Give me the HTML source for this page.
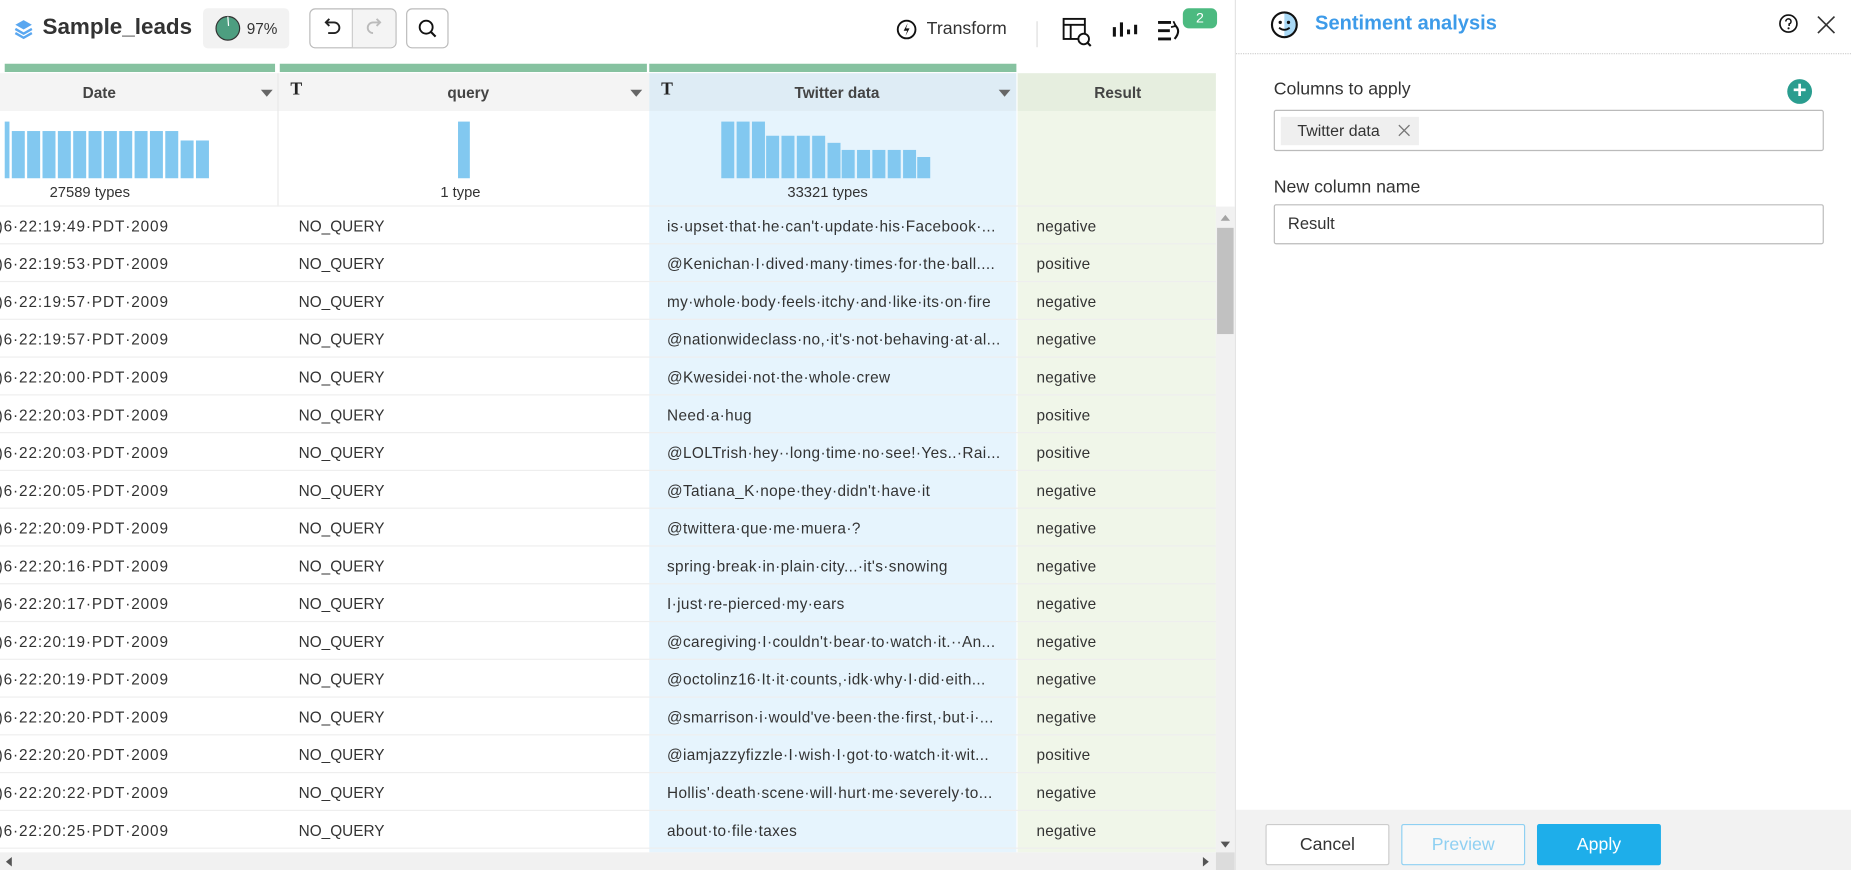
<!DOCTYPE html>
<html><head><meta charset="utf-8"><style>
*{box-sizing:border-box;margin:0;padding:0}
html,body{width:1851px;height:870px;overflow:hidden;background:#fff}
#s{position:absolute;left:0;top:0;width:1568px;height:737px;transform:scale(1.18048);transform-origin:0 0;font-family:"Liberation Sans",sans-serif;color:#333;overflow:hidden}
.a{position:absolute}
.row{position:absolute;left:0;width:1030px;height:32px;border-bottom:1px solid #eee;font-size:13px}
.row span{position:absolute;top:9px;white-space:nowrap}
.row span:nth-child(1){letter-spacing:0.75px}
.row span:nth-child(3){letter-spacing:0.33px}
.row span:nth-child(4){letter-spacing:0.2px}
.bar{position:absolute;background:#82c8f0;bottom:0}
.btn{position:absolute;top:698px;height:35px;width:105px;border:1px solid #ccc;border-radius:2px;font-size:15px;text-align:center;line-height:33px}
.h{font-size:13px;font-weight:bold;color:#444}
</style></head><body><div id="s">
<!-- top bar -->
<svg class="a" style="left:10px;top:15px" width="20" height="20" viewBox="0 0 20 20"><path d="M10 2L17 6 10 10 3 6Z" fill="#5aa7f0"/><path d="M3 9.5L10 13.5 17 9.5" fill="none" stroke="#5aa7f0" stroke-width="2"/><path d="M3 13L10 17 17 13" fill="none" stroke="#5aa7f0" stroke-width="2"/></svg>
<div class="a" style="left:36px;top:13px;font-size:19px;font-weight:bold;color:#333">Sample_leads</div>
<div class="a" style="left:172px;top:7px;width:73px;height:34px;background:#f2f2f2;border-radius:4px"></div>
<svg class="a" style="left:182px;top:13px" width="22" height="22"><ellipse cx="11" cy="11" rx="10" ry="10" fill="#4d9e80" stroke="#333" stroke-width="1"/><path d="M11 1L11.6 9" stroke="#fff" stroke-width="1"/></svg>
<div class="a" style="left:209px;top:17px;font-size:13px">97%</div>
<div class="a" style="left:262px;top:7px;width:74px;height:34px;border:1px solid #bbb;border-radius:5px;overflow:hidden"><div class="a" style="left:35px;top:0;width:38px;height:34px;background:#f4f4f4;border-left:1px solid #ccc"></div></div>
<svg class="a" style="left:271px;top:14px" width="20" height="20" viewBox="0 0 20 20"><path d="M6 5H12a4.5 4.5 0 0 1 0 9H7" fill="none" stroke="#222" stroke-width="1.6"/><path d="M8 2L5 5 8 8" fill="none" stroke="#222" stroke-width="1.6"/></svg>
<svg class="a" style="left:307px;top:14px" width="20" height="20" viewBox="0 0 20 20"><path d="M14 5H9a4.5 4.5 0 0 0 0 9" fill="none" stroke="#bbb" stroke-width="1.6"/><path d="M12 2L15 5 12 8" fill="none" stroke="#bbb" stroke-width="1.6"/></svg>
<div class="a" style="left:344px;top:7px;width:36px;height:34px;border:1px solid #bbb;border-radius:5px"></div>
<svg class="a" style="left:352px;top:14px" width="20" height="20"><circle cx="9" cy="9" r="5.5" fill="none" stroke="#111" stroke-width="1.6"/><path d="M13 13L17 17" stroke="#111" stroke-width="1.8"/></svg>
<svg class="a" style="left:758px;top:15px" width="20" height="20"><circle cx="10" cy="10" r="7.5" fill="none" stroke="#111" stroke-width="1.6"/><path d="M11 4.5L7.5 11H10.5L9 15.5 12.5 9H9.5Z" fill="#111"/></svg>
<div class="a" style="left:785px;top:16px;font-size:15px;color:#333">Transform</div>
<div class="a" style="left:878px;top:18px;width:1px;height:22px;background:#ddd"></div>
<svg class="a" style="left:899px;top:14px" width="28" height="28"><rect x="2" y="2" width="18" height="17" fill="none" stroke="#111" stroke-width="1.6"/><path d="M2 7H20M8 7V19" stroke="#111" stroke-width="1.6"/><circle cx="19" cy="19" r="4.5" fill="#fff" stroke="#111" stroke-width="1.6"/><path d="M22 22L25 25" stroke="#111" stroke-width="1.8"/></svg>
<svg class="a" style="left:941px;top:17px" width="24" height="20"><path d="M3 6V14M9 2V14M15 8V12M21 4V12" stroke="#111" stroke-width="2.6"/></svg>
<svg class="a" style="left:979px;top:15px" width="24" height="24"><path d="M2 4H13M2 11H12M2 18H13" stroke="#111" stroke-width="2.4"/><path d="M16 6Q22 11 16 18" fill="none" stroke="#111" stroke-width="1.8"/><path d="M15 3L17 7 13 8" fill="none" stroke="#111" stroke-width="1.5"/></svg>
<div class="a" style="left:1002px;top:7px;width:29px;height:17px;background:#4cba80;border-radius:5px;color:#fff;font-size:12px;text-align:center;line-height:17px">2</div>

<!-- grid headers -->
<div class="a" style="left:4px;top:54px;width:229px;height:7px;background:#86c2a0"></div>
<div class="a" style="left:237px;top:54px;width:311px;height:7px;background:#86c2a0"></div>
<div class="a" style="left:550px;top:54px;width:311px;height:7px;background:#86c2a0"></div>
<div class="a" style="left:0;top:62px;width:550px;height:32px;background:#f4f4f4"></div>
<div class="a" style="left:235px;top:62px;width:1px;height:113px;background:#e8e8e8"></div>
<div class="a" style="left:550px;top:62px;width:311px;height:32px;background:#deecf5"></div>
<div class="a" style="left:862px;top:62px;width:168px;height:32px;background:#e6eedf"></div>
<div class="a" style="left:550px;top:94px;width:311px;height:628px;background:#e6f4fd"></div>
<div class="a" style="left:862px;top:94px;width:168px;height:628px;background:#f0f6e9"></div>
<div class="a h" style="left:70px;top:71px">Date</div>
<div class="a" style="left:221px;top:76px;width:0;height:0;border-left:5px solid transparent;border-right:5px solid transparent;border-top:6px solid #666"></div>
<div class="a" style="left:246px;top:68px;font-size:15px;font-weight:bold;font-family:'Liberation Serif',serif;color:#222">T</div>
<div class="a h" style="left:379px;top:71px">query</div>
<div class="a" style="left:534px;top:76px;width:0;height:0;border-left:5px solid transparent;border-right:5px solid transparent;border-top:6px solid #666"></div>
<div class="a" style="left:560px;top:68px;font-size:15px;font-weight:bold;font-family:'Liberation Serif',serif;color:#222">T</div>
<div class="a h" style="left:673px;top:71px">Twitter data</div>
<div class="a" style="left:846px;top:76px;width:0;height:0;border-left:5px solid transparent;border-right:5px solid transparent;border-top:6px solid #666"></div>
<div class="a h" style="left:927px;top:71px">Result</div>
<!-- histograms -->
<div class="a" style="left:4px;top:100px;width:180px;height:51px">
<div class="bar" style="left:0;width:4px;height:48px"></div>
<div class="bar" style="left:5.5px;width:11px;height:40px"></div><div class="bar" style="left:18.5px;width:11px;height:40px"></div><div class="bar" style="left:31.5px;width:11px;height:40px"></div><div class="bar" style="left:44.5px;width:11px;height:40px"></div><div class="bar" style="left:57.5px;width:11px;height:40px"></div><div class="bar" style="left:70.5px;width:11px;height:40px"></div><div class="bar" style="left:83.5px;width:11px;height:40px"></div><div class="bar" style="left:96.5px;width:11px;height:40px"></div><div class="bar" style="left:109.5px;width:11px;height:40px"></div><div class="bar" style="left:122.5px;width:11px;height:40px"></div><div class="bar" style="left:135.5px;width:11px;height:40px"></div>
<div class="bar" style="left:148.5px;width:11px;height:32px"></div><div class="bar" style="left:161.5px;width:11px;height:32px"></div>
</div>
<div class="a" style="left:42px;top:156px;font-size:12.5px">27589 types</div>
<div class="a" style="left:388px;top:103px;width:10px;height:48px;background:#82c8f0"></div>
<div class="a" style="left:373px;top:156px;font-size:12.5px">1 type</div>
<div class="a" style="left:611px;top:100px;width:200px;height:51px">
<div class="bar" style="left:0;width:11px;height:48px"></div><div class="bar" style="left:12.8px;width:11px;height:48px"></div><div class="bar" style="left:25.6px;width:11px;height:48px"></div>
<div class="bar" style="left:38.4px;width:11px;height:36px"></div><div class="bar" style="left:51.2px;width:11px;height:36px"></div><div class="bar" style="left:64px;width:11px;height:36px"></div><div class="bar" style="left:76.8px;width:11px;height:36px"></div>
<div class="bar" style="left:89.6px;width:11px;height:30px"></div>
<div class="bar" style="left:102.4px;width:11px;height:24px"></div><div class="bar" style="left:115.2px;width:11px;height:24px"></div><div class="bar" style="left:128px;width:11px;height:24px"></div><div class="bar" style="left:140.8px;width:11px;height:24px"></div><div class="bar" style="left:153.6px;width:11px;height:24px"></div>
<div class="bar" style="left:166.4px;width:11px;height:18px"></div>
</div>
<div class="a" style="left:667px;top:156px;font-size:12.5px">33321 types</div>
<div class="a" style="left:0;top:174px;width:1030px;height:1px;background:#eee"></div>

<!-- rows -->
<div class="a" style="left:0;top:175px">
<div class="row" style="top:0"><span style="left:-2px">)6·22:19:49·PDT·2009</span><span style="left:253px">NO_QUERY</span><span style="left:565px">is·upset·that·he·can't·update·his·Facebook·...</span><span style="left:878px">negative</span></div>
<div class="row" style="top:32px"><span style="left:-2px">)6·22:19:53·PDT·2009</span><span style="left:253px">NO_QUERY</span><span style="left:565px">@Kenichan·I·dived·many·times·for·the·ball....</span><span style="left:878px">positive</span></div>
<div class="row" style="top:64px"><span style="left:-2px">)6·22:19:57·PDT·2009</span><span style="left:253px">NO_QUERY</span><span style="left:565px">my·whole·body·feels·itchy·and·like·its·on·fire</span><span style="left:878px">negative</span></div>
<div class="row" style="top:96px"><span style="left:-2px">)6·22:19:57·PDT·2009</span><span style="left:253px">NO_QUERY</span><span style="left:565px">@nationwideclass·no,·it's·not·behaving·at·al...</span><span style="left:878px">negative</span></div>
<div class="row" style="top:128px"><span style="left:-2px">)6·22:20:00·PDT·2009</span><span style="left:253px">NO_QUERY</span><span style="left:565px">@Kwesidei·not·the·whole·crew</span><span style="left:878px">negative</span></div>
<div class="row" style="top:160px"><span style="left:-2px">)6·22:20:03·PDT·2009</span><span style="left:253px">NO_QUERY</span><span style="left:565px">Need·a·hug</span><span style="left:878px">positive</span></div>
<div class="row" style="top:192px"><span style="left:-2px">)6·22:20:03·PDT·2009</span><span style="left:253px">NO_QUERY</span><span style="left:565px">@LOLTrish·hey··long·time·no·see!·Yes..·Rai...</span><span style="left:878px">positive</span></div>
<div class="row" style="top:224px"><span style="left:-2px">)6·22:20:05·PDT·2009</span><span style="left:253px">NO_QUERY</span><span style="left:565px">@Tatiana_K·nope·they·didn't·have·it</span><span style="left:878px">negative</span></div>
<div class="row" style="top:256px"><span style="left:-2px">)6·22:20:09·PDT·2009</span><span style="left:253px">NO_QUERY</span><span style="left:565px">@twittera·que·me·muera·?</span><span style="left:878px">negative</span></div>
<div class="row" style="top:288px"><span style="left:-2px">)6·22:20:16·PDT·2009</span><span style="left:253px">NO_QUERY</span><span style="left:565px">spring·break·in·plain·city...·it's·snowing</span><span style="left:878px">negative</span></div>
<div class="row" style="top:320px"><span style="left:-2px">)6·22:20:17·PDT·2009</span><span style="left:253px">NO_QUERY</span><span style="left:565px">I·just·re-pierced·my·ears</span><span style="left:878px">negative</span></div>
<div class="row" style="top:352px"><span style="left:-2px">)6·22:20:19·PDT·2009</span><span style="left:253px">NO_QUERY</span><span style="left:565px">@caregiving·I·couldn't·bear·to·watch·it.··An...</span><span style="left:878px">negative</span></div>
<div class="row" style="top:384px"><span style="left:-2px">)6·22:20:19·PDT·2009</span><span style="left:253px">NO_QUERY</span><span style="left:565px">@octolinz16·It·it·counts,·idk·why·I·did·eith...</span><span style="left:878px">negative</span></div>
<div class="row" style="top:416px"><span style="left:-2px">)6·22:20:20·PDT·2009</span><span style="left:253px">NO_QUERY</span><span style="left:565px">@smarrison·i·would've·been·the·first,·but·i·...</span><span style="left:878px">negative</span></div>
<div class="row" style="top:448px"><span style="left:-2px">)6·22:20:20·PDT·2009</span><span style="left:253px">NO_QUERY</span><span style="left:565px">@iamjazzyfizzle·I·wish·I·got·to·watch·it·wit...</span><span style="left:878px">positive</span></div>
<div class="row" style="top:480px"><span style="left:-2px">)6·22:20:22·PDT·2009</span><span style="left:253px">NO_QUERY</span><span style="left:565px">Hollis'·death·scene·will·hurt·me·severely·to...</span><span style="left:878px">negative</span></div>
<div class="row" style="top:512px"><span style="left:-2px">)6·22:20:25·PDT·2009</span><span style="left:253px">NO_QUERY</span><span style="left:565px">about·to·file·taxes</span><span style="left:878px">negative</span></div>
</div>
<!-- scrollbars -->
<div class="a" style="left:1030px;top:175px;width:16px;height:547px;background:#f1f1f1"></div>
<div class="a" style="left:1031px;top:193px;width:14px;height:90px;background:#c1c1c1"></div>
<div class="a" style="left:1034px;top:182px;width:0;height:0;border-left:4px solid transparent;border-right:4px solid transparent;border-bottom:5px solid #a3a3a3"></div>
<div class="a" style="left:1034px;top:713px;width:0;height:0;border-left:4px solid transparent;border-right:4px solid transparent;border-top:5px solid #555"></div>
<div class="a" style="left:0;top:722px;width:1030px;height:15px;background:#f1f1f1"></div>
<div class="a" style="left:1030px;top:722px;width:16px;height:15px;background:#dcdcdc"></div>
<div class="a" style="left:5px;top:726px;width:0;height:0;border-top:4px solid transparent;border-bottom:4px solid transparent;border-right:5px solid #555"></div>
<div class="a" style="left:1019px;top:726px;width:0;height:0;border-top:4px solid transparent;border-bottom:4px solid transparent;border-left:5px solid #555"></div>

<!-- side panel -->
<div class="a" style="left:1046px;top:0;width:522px;height:737px;background:#fff;border-left:1px solid #e4e4e4"></div>
<div class="a" style="left:1047px;top:45px;width:521px;height:0;border-top:1px dotted #ccc"></div>
<svg class="a" style="left:1074px;top:7px" width="28" height="28"><path d="M14 3.5a10.5 10.5 0 0 1 0 21Z" fill="#a8d8f5"/><circle cx="14" cy="14" r="10.5" fill="none" stroke="#111" stroke-width="1.8"/><circle cx="10.5" cy="12" r="1.4" fill="#111"/><circle cx="17.5" cy="12" r="1.4" fill="#111"/><path d="M9.5 16.5Q14 20 18.5 16.5" fill="none" stroke="#111" stroke-width="1.5"/></svg>
<div class="a" style="left:1114px;top:10px;font-size:17px;font-weight:bold;color:#3d9be9">Sentiment analysis</div>
<svg class="a" style="left:1506px;top:11px" width="18" height="18"><circle cx="9" cy="9" r="7.2" fill="none" stroke="#111" stroke-width="1.4"/><path d="M6.8 7.2a2.2 2.2 0 1 1 2.8 2.1V11" fill="none" stroke="#111" stroke-width="1.3"/><circle cx="9.1" cy="13" r="0.9" fill="#111"/></svg>
<svg class="a" style="left:1538px;top:12px" width="18" height="18"><path d="M2 2L16 16M16 2L2 16" stroke="#333" stroke-width="1.4"/></svg>
<div class="a" style="left:1079px;top:67px;font-size:15px;color:#333">Columns to apply</div>
<div class="a" style="left:1514px;top:67px;width:21px;height:21px;border-radius:50%;background:#2a9d8f;color:#fff;font-size:20px;font-weight:bold;text-align:center;line-height:21px">+</div>
<div class="a" style="left:1079px;top:93px;width:466px;height:35px;border:1px solid #bbb;border-radius:2px"></div>
<div class="a" style="left:1085px;top:99px;width:117px;height:24px;background:#efefef"></div>
<div class="a" style="left:1099px;top:103px;font-size:13.5px;color:#333">Twitter data</div>
<svg class="a" style="left:1184px;top:105px" width="11" height="11"><path d="M1 1L10 10M10 1L1 10" stroke="#777" stroke-width="1.1"/></svg>
<div class="a" style="left:1079px;top:150px;font-size:15px;color:#333">New column name</div>
<div class="a" style="left:1079px;top:173px;width:466px;height:34px;border:1px solid #bbb;border-radius:2px"></div>
<div class="a" style="left:1091px;top:181px;font-size:14px;color:#333">Result</div>
<div class="a" style="left:1047px;top:686px;width:521px;height:51px;background:#f2f2f2"></div>
<div class="btn" style="left:1072px;background:#fff;color:#333">Cancel</div>
<div class="btn" style="left:1187px;background:#f8f8f8;border-color:#8fd0f2;color:#8fd0f2">Preview</div>
<div class="btn" style="left:1302px;background:#1eaeea;border-color:#1eaeea;color:#fff">Apply</div>
</div></body></html>
